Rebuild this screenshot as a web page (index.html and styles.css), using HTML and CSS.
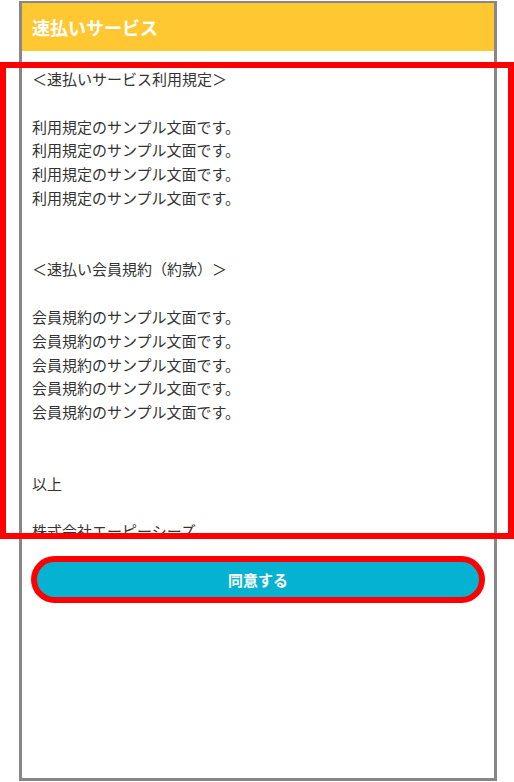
FILE: index.html
```html
<!DOCTYPE html>
<html lang="ja">
<head>
<meta charset="utf-8">
<title>速払いサービス</title>
<link rel="stylesheet" href="styles.css">
</head>
<body>
<div class="frame">
  <header class="head">速払いサービス</header>
  <div class="terms">
    <p class="para">＜速払いサービス利用規定＞</p>
    <p class="para gap2">利用規定のサンプル文面です。<br>利用規定のサンプル文面です。<br>利用規定のサンプル文面です。<br>利用規定のサンプル文面です。</p>
    <p class="para">＜速払い会員規約（約款）＞</p>
    <p class="para gap2">会員規約のサンプル文面です。<br>会員規約のサンプル文面です。<br>会員規約のサンプル文面です。<br>会員規約のサンプル文面です。<br>会員規約のサンプル文面です。</p>
    <p class="para">以上</p>
    <p class="para">株式会社エーピーシーズ</p>
  </div>
  <div class="actions">
    <button class="agree" type="button">同意する</button>
  </div>
</div>
<div class="mark-box"></div>
</body>
</html>
```
FILE: styles.css
```css
html, body {
  margin: 0;
  padding: 0;
  background: #ffffff;
}
body {
  font-family: "Noto Sans CJK JP", "Noto Sans", sans-serif;
  color: #333333;
  position: relative;
  width: 514px;
  height: 782px;
  overflow: hidden;
}
.frame {
  box-sizing: border-box;
  width: 478px;
  height: 780px;
  margin: 1px 0 0 19px;
  border: 3px solid #878787;
  border-top-width: 2px;
  display: flex;
  flex-direction: column;
}
.head {
  height: 48px;
  background: #ffc833;
  color: #ffffff;
  font-weight: 700;
  font-size: 18px;
  line-height: 48px;
  padding-left: 10px;
  flex: none;
}
.terms {
  height: 488px;
  box-sizing: border-box;
  padding: 16px 10px 0 10px;
  overflow: hidden;
  font-size: 15px;
  line-height: 23.8px;
  flex: none;
}
.para {
  margin: 0 0 23.8px 0;
}
.para.gap2 {
  margin-bottom: 47.6px;
}
.actions {
  padding: 23px 15px 0 15px;
  flex: none;
}
.agree {
  display: block;
  width: 442px;
  height: 35px;
  border: none;
  border-radius: 18px;
  background: #05b2d2;
  color: #ffffff;
  font-family: "Noto Sans CJK JP", "Noto Sans", sans-serif;
  font-weight: 700;
  font-size: 15px;
  line-height: 35px;
  padding: 0;
  box-shadow: 0 0 0 6px #ff0000;
}
.mark-box {
  position: absolute;
  left: 0;
  top: 62px;
  width: 514px;
  height: 477px;
  box-sizing: border-box;
  border: 6px solid #ff0000;
  pointer-events: none;
}
```
